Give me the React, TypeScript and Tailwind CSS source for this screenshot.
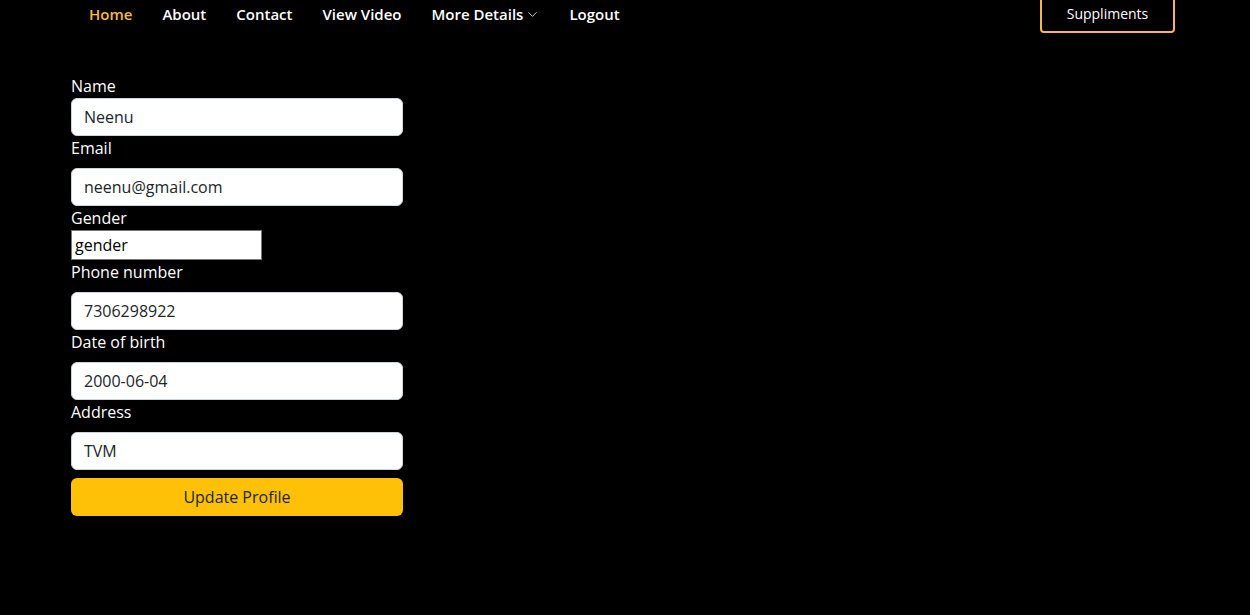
import { ChevronDown } from "lucide-react";

const fields = [
  { label: "Name", value: "Neenu", first: true },
  { label: "Email", value: "neenu@gmail.com" },
];

const moreFields = [
  { label: "Phone number", value: "7306298922" },
  { label: "Date of birth", value: "2000-06-04" },
  { label: "Address", value: "TVM" },
];

const Field = ({ label, value, first }: { label: string; value: string; first?: boolean }) => (
  <div className="flex flex-col">
    <label className="text-base leading-6 text-white">{label}</label>
    <input
      defaultValue={value}
      className={`${first ? "" : "mt-2"} h-[38px] w-full rounded-[6px] border border-[#ced4da] bg-white px-3 text-base text-[#212529] outline-none`}
    />
  </div>
);

export default function App() {
  return (
    <div className="min-h-screen bg-black font-['Open_Sans',sans-serif] text-white">
      <nav className="flex h-[28px] items-center">
        <ul className="ml-[89px] flex items-center gap-[30px] text-[15px] font-semibold">
          <li className="text-[#f6b84d]">Home</li>
          <li>About</li>
          <li>Contact</li>
          <li>View Video</li>
          <li className="flex items-center gap-[2px]">
            More Details <ChevronDown size={15} strokeWidth={1.3} className="-mr-[1px]" />
          </li>
          <li>Logout</li>
        </ul>
        <button className="ml-auto mr-[75px] mt-[-4px] h-[42px] w-[135px] rounded-[4px] border-2 border-[#f6b84d] pt-[4px] text-sm text-white">
          Suppliments
        </button>
      </nav>

      <form className="ml-[71px] mt-[46px] flex w-[332px] flex-col">
        {fields.map((f) => (
          <Field key={f.label} {...f} />
        ))}
        <div className="flex flex-col">
          <label className="text-base leading-6 text-white">Gender</label>
          <input
            defaultValue="gender"
            className="h-[30px] w-[191px] border border-[#767676] bg-white px-[3px] text-base text-black outline-none"
          />
        </div>
        {moreFields.map((f) => (
          <Field key={f.label} {...f} />
        ))}
        <button
          type="button"
          className="mt-2 h-[38px] w-full rounded-[6px] bg-[#ffc107] text-base text-[#212529]"
        >
          Update Profile
        </button>
      </form>
    </div>
  );
}
